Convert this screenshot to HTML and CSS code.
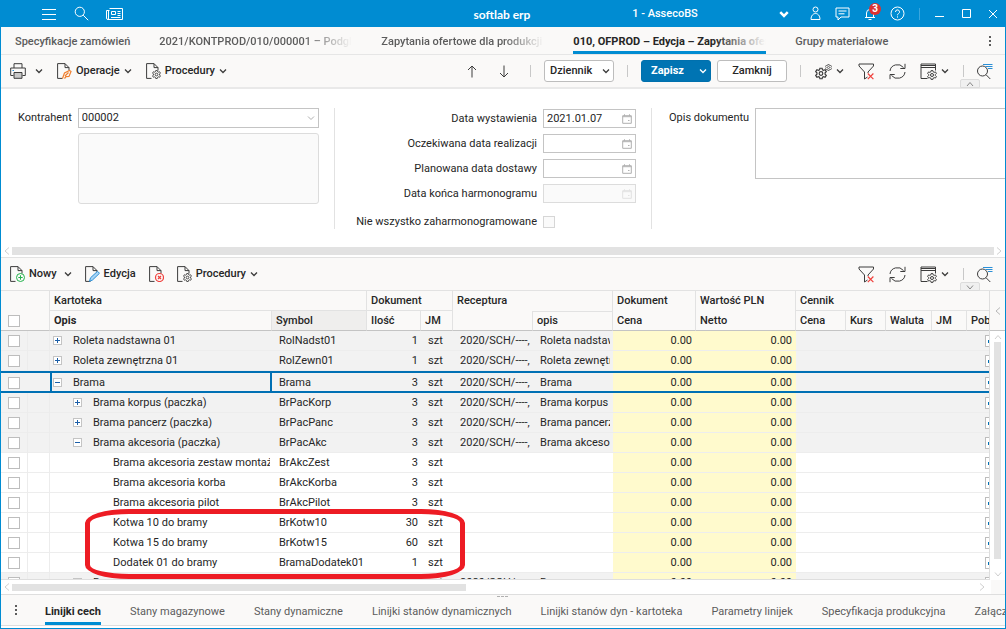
FILE: index.html
```html
<!DOCTYPE html>
<html lang="pl">
<head>
  <meta charset="UTF-8" />
  <meta name="viewport" content="width=device-width, initial-scale=1.0"/>
  <title>softlab erp</title>
  <link rel="stylesheet" href="styles.css">
</head>
<body>

  <!-- Icon set -->
  <svg class="sprite" aria-hidden="true">
    <symbol id="chev" viewBox="0 0 8 8"><path d="M1 2.5l3 3 3-3" /></symbol>
    <symbol id="left" viewBox="0 0 8 8"><path d="M6 0.500L2 4l4 3.500" /></symbol>
    <symbol id="right" viewBox="0 0 8 8"><path d="M2 0.500L6 4l-4 3.500" /></symbol>
    <symbol id="up" viewBox="0 0 8 8"><path d="M1 6l3-3.500L7 6" /></symbol>
    <symbol id="down" viewBox="0 0 8 8"><path d="M1 2.500L4 6l3-3.500" /></symbol>
    <symbol id="dots" viewBox="0 0 4 12"><path d="M1 1h2v2H1zM1 5h2v2H1zM1 9h2v2H1z" /></symbol>
    <symbol id="gear" viewBox="0 0 10 10"><path d="M4.100 0.600h1.800l.3 1.300 1 .5 1.200-.5 1 1.500-1 1v1.200l1 1-1 1.500-1.200-.5-1 .5-.3 1.300H4.100l-.3-1.300-1-.5-1.200.5-1-1.500 1-1V4.400l-1-1 1-1.500 1.200.5 1-.5z" /><circle cx="5" cy="5" r="1.500" /></symbol>
    <symbol id="page" viewBox="0 0 16 16"><path d="M6.500 15.400H1.600V0.600H9l4 4v2.900M9 0.600v4h4" /></symbol>
    <symbol id="filter" viewBox="0 0 17 17"><path d="M1 1h14.500v2L10 9v1M1 1v2l5.500 6v7l3-2" /><path class="red" d="M9.800 10.500l5.600 5.600m0-5.600l-5.600 5.600" /></symbol>
    <symbol id="refresh" viewBox="0 0 17 17"><path d="M1 8a7.500 7 0 0 1 13.500-3.500M16 9a7.500 7 0 0 1-13.500 3.500M16 .8V5.500h-4.700M1 16.200v-4.700h4.700" /></symbol>
    <symbol id="window" viewBox="0 0 17 17"><path d="M15.500 7.500V1H1v14.500h6.500M1 4.500h14.500M1 2.500h14.500" /><use href="#gear" x="7" y="7" width="10" height="10" /></symbol>
    <symbol id="find" viewBox="0 0 17 17"><circle cx="6.500" cy="8" r="5" /><path d="M10 11.700l4.300 4.300" /><path class="blue" d="M7 1.500h9.500M9.500 3.500h7M12 5.500h4.500" /></symbol>
    <symbol id="calendar" viewBox="0 0 10 10"><path d="M.7 1.700h8.600v7.600H.7zM.7 2.700h8.600M2.500 .3v1.500M7.500 .3v1.500" /><path d="M6 6.500h1.500" /></symbol>
  </svg>

  <header class="titlebar">
    <div class="title-left">
      <button aria-label="Menu"><svg width="16" height="16" viewBox="0 0 16 16"><path d="M1 3.500h14M1 8.500h14M1 13.500h14" /></svg></button>
      <button aria-label="Szukaj"><svg width="15" height="15" viewBox="0 0 15 15"><circle cx="5.800" cy="5.800" r="4.600" /><path d="M9.200 9.200l5 5" /></svg></button>
      <button aria-label="Aktualności"><svg width="17" height="14" viewBox="0 0 17 14"><path d="M3.500 1.500h13v11H2A1.500 1.500 0 0 1 .5 11V3.500h3M2.500 3.500V12M5.500 4.500h4v3h-4zM11.500 4.500h3M11.500 6.500h3M11.500 8.500h3M5 10.500h9.500" /></svg></button>
    </div>
    <h1 class="brand">softlab erp</h1>
    <label class="company">
      <select aria-label="Firma"><option>1 - AssecoBS</option></select>
      <svg class="chev" width="10" height="10"><use href="#chev" /></svg>
    </label>
    <div class="title-right">
      <button aria-label="Użytkownik"><svg width="11" height="15" viewBox="0 0 11 15"><circle cx="5.500" cy="3.500" r="2.500" /><path d="M1 13.500c0-8 9-8 9 0z" /></svg></button>
      <button aria-label="Wiadomości"><svg width="15" height="14" viewBox="0 0 15 14"><path d="M1 1h13v9H6l-3 3v-3H1zM3.500 4h8M3.500 6.800h6" /></svg></button>
      <button class="bell" aria-label="Powiadomienia"><svg width="12" height="14" viewBox="0 0 12 14"><path d="M1 10.500h10M2.500 10.500V6a3.500 3.500 0 0 1 7 0v4.500M4.500 12.500h3" /></svg><span class="badge">3</span></button>
      <button aria-label="Pomoc"><svg width="15" height="15" viewBox="0 0 15 15"><circle cx="7.500" cy="7.500" r="6.500" /><path d="M5.500 6a2 2 0 1 1 3 1.600q-1 .5-1 1.700M7.500 10.400v1.200" /></svg></button>
      <span class="sep"></span>
      <button aria-label="Minimalizuj"><svg width="11" height="11" viewBox="0 0 11 11"><path d="M1 8.500h9" /></svg></button>
      <button aria-label="Maksymalizuj"><svg width="11" height="11" viewBox="0 0 11 11"><path d="M1.500 1.500h8v8h-8z" /></svg></button>
      <button aria-label="Zamknij okno"><svg width="10" height="10" viewBox="0 0 10 10"><path d="M1 1l8 8M9 1L1 9" /></svg></button>
    </div>
  </header>

  <nav class="doc-tabs">
    <a href="#">Specyfikacje zamówień</a>
    <a href="#" class="cut wide">2021/KONTPROD/010/000001 – Podgląd</a>
    <a href="#" class="cut">Zapytania ofertowe dla produkcji</a>
    <a href="#" class="cut wide active">010, OFPROD – Edycja – Zapytania ofertowe</a>
    <a href="#">Grupy materiałowe</a>
    <button class="more" aria-label="Więcej kart"><svg width="4" height="12"><use href="#dots" /></svg></button>
  </nav>

  <!-- Document toolbar -->
  <div class="toolbar">
    <button class="tool print" aria-label="Drukuj"><svg width="16" height="16" viewBox="0 0 16 16"><path d="M4 5V.7h8V5M3.500 12.500H.7V5h14.600v7.500h-2.800" /><path class="paper" d="M4 9.500h8v5.800H4z" /><path class="blue" d="M2.500 7.500h1.500" /></svg><svg class="chev" width="8" height="8"><use href="#chev" /></svg></button>
    <button class="tool"><svg width="16" height="16" viewBox="0 0 16 16"><use href="#page" /><path class="orange" d="M6.500 15.500l2-5.500 5-2.500 1.500 1-2 5-3 .2-1.500 1.800M9 13l3.500-3.500" /></svg>Operacje<svg class="chev" width="8" height="8"><use href="#chev" /></svg></button>
    <button class="tool"><svg width="16" height="16" viewBox="0 0 16 16"><use href="#page" /><use href="#gear" x="7" y="7" width="9" height="9" /></svg>Procedury<svg class="chev" width="8" height="8"><use href="#chev" /></svg></button>

    <div class="actions">
      <div class="arrows">
        <button class="tool" aria-label="Poprzedni"><svg width="10" height="13" viewBox="0 0 10 13"><path d="M5 12.500V1M1 5l4-4 4 4" /></svg></button>
        <button class="tool" aria-label="Następny"><svg width="10" height="13" viewBox="0 0 10 13"><path d="M5 .5V12M1 8l4 4 4-4" /></svg></button>
      </div>
      <span class="sep"></span>
      <label class="journal">
        <select aria-label="Dziennik"><option>Dziennik</option></select>
        <svg class="chev" width="8" height="8"><use href="#chev" /></svg>
      </label>
      <span class="sep"></span>
      <div class="buttons">
        <button class="btn save">Zapisz<svg class="chev" width="8" height="8"><use href="#chev" /></svg></button>
        <button class="btn">Zamknij</button>
      </div>
    </div>
    <div class="view-tools">
      <span class="sep"></span>
      <button class="tool" aria-label="Ustawienia"><svg width="17" height="17" viewBox="0 0 17 17"><use href="#gear" x="0" y="4.500" width="12" height="12" /><use href="#gear" x="10" y="1" width="7" height="7" /></svg><svg class="chev" width="8" height="8"><use href="#chev" /></svg></button>
      <button class="tool" aria-label="Usuń filtr"><svg width="17" height="17"><use href="#filter" /></svg></button>
      <button class="tool" aria-label="Odśwież"><svg width="17" height="17"><use href="#refresh" /></svg></button>
      <button class="tool" aria-label="Widok"><svg width="17" height="17"><use href="#window" /></svg><svg class="chev" width="8" height="8"><use href="#chev" /></svg></button>
      <div class="search-tool">
        <span class="sep"></span>
        <button class="tool" aria-label="Wyszukaj"><svg width="17" height="17"><use href="#find" /></svg></button>
      </div>
    </div>
    <button class="fold" aria-label="Zwiń"><svg width="8" height="8"><use href="#up" /></svg></button>
  </div>

  <!-- Document header form -->
  <form class="form">
    <div class="col customer">
      <label for="kontrahent">Kontrahent</label>
      <div class="stack">
        <div class="field">
          <select id="kontrahent"><option>000002</option></select>
          <svg class="chev" width="8" height="8"><use href="#chev" /></svg>
        </div>
        <textarea aria-label="Dane kontrahenta" disabled></textarea>
      </div>
    </div>
    <div class="col dates">
      <label for="d1">Data wystawienia</label>
      <div class="field"><input id="d1" type="text" value="2021.01.07"><svg width="10" height="10"><use href="#calendar" /></svg></div>
      <label for="d2">Oczekiwana data realizacji</label>
      <div class="field"><input id="d2" type="text"><svg width="10" height="10"><use href="#calendar" /></svg></div>
      <label for="d3">Planowana data dostawy</label>
      <div class="field"><input id="d3" type="text"><svg width="10" height="10"><use href="#calendar" /></svg></div>
      <label for="d4">Data końca harmonogramu</label>
      <div class="field off"><input id="d4" type="text" disabled><svg width="10" height="10"><use href="#calendar" /></svg></div>
      <label for="nie">Nie wszystko zaharmonogramowane</label>
      <input id="nie" type="checkbox" disabled>
    </div>
    <div class="col notes">
      <label for="opis">Opis dokumentu</label>
      <textarea id="opis"></textarea>
    </div>
  </form>
  <div class="hscroll full">
    <svg width="8" height="8"><use href="#left" /></svg>
    <span class="thumb"></span>
    <svg width="8" height="8"><use href="#right" /></svg>
  </div>

  <!-- Lines toolbar -->
  <div class="toolbar lines">
    <button class="tool new"><svg width="16" height="16" viewBox="0 0 16 16"><use href="#page" /><circle class="green" cx="11.500" cy="11.500" r="4" /><path class="green" d="M9.300 11.500h4.400M11.500 9.300v4.400" /></svg>Nowy<svg class="chev" width="8" height="8"><use href="#chev" /></svg></button>
    <button class="tool"><svg width="16" height="16" viewBox="0 0 16 16"><use href="#page" /><path class="blue pen" d="M5.500 15.300l1-3.500 7-6.500 2 2-7 6.700z" /></svg>Edycja</button>
    <button class="tool" aria-label="Usuń"><svg width="16" height="16" viewBox="0 0 16 16"><use href="#page" /><circle class="red" cx="11.500" cy="11.500" r="4" /><path class="red" d="M10 10l3 3m0-3l-3 3" /></svg></button>
    <button class="tool"><svg width="16" height="16" viewBox="0 0 16 16"><use href="#page" /><use href="#gear" x="7" y="7" width="9" height="9" /></svg>Procedury<svg class="chev" width="8" height="8"><use href="#chev" /></svg></button>
    <div class="view-tools">
      <button class="tool" aria-label="Usuń filtr"><svg width="17" height="17"><use href="#filter" /></svg></button>
      <button class="tool" aria-label="Odśwież"><svg width="17" height="17"><use href="#refresh" /></svg></button>
      <button class="tool" aria-label="Widok"><svg width="17" height="17"><use href="#window" /></svg><svg class="chev" width="8" height="8"><use href="#chev" /></svg></button>
      <div class="search-tool">
        <span class="sep"></span>
        <button class="tool" aria-label="Wyszukaj"><svg width="17" height="17"><use href="#find" /></svg></button>
      </div>
    </div>
    <button class="fold" aria-label="Rozwiń"><svg width="8" height="8"><use href="#down" /></svg></button>
  </div>

  <main class="grid">
    <div class="table-wrap">
      <table>
        <colgroup>
          <col class="w-check"><col class="w-mark"><col class="w-opis"><col class="w-symbol"><col class="w-ilosc"><col class="w-jm"><col class="w-rec"><col class="w-rec"><col class="w-cena"><col class="w-netto"><col class="w-price"><col class="w-kurs"><col class="w-waluta"><col class="w-unit"><col>
        </colgroup>
        <thead>
          <tr>
            <th rowspan="2" class="pick"><input type="checkbox" aria-label="Zaznacz wszystko"></th>
            <th rowspan="2"></th>
            <th colspan="2" class="group">Kartoteka</th>
            <th colspan="2" class="group">Dokument</th>
            <th colspan="2">Receptura</th>
            <th>Dokument</th>
            <th>Wartość PLN</th>
            <th colspan="5" class="group">Cennik</th>
          </tr>
          <tr>
            <th class="sorted">Opis</th>
            <th class="current">Symbol</th>
            <th>Ilość</th>
            <th>JM</th>
            <th></th>
            <th class="top">opis</th>
            <th>Cena</th>
            <th>Netto</th>
            <th>Cena</th>
            <th>Kurs</th>
            <th>Waluta</th>
            <th>JM</th>
            <th>Pob</th>
          </tr>
        </thead>
        <tbody>
          <tr class="node">
            <td class="pick"><input type="checkbox" aria-label="Zaznacz"></td><td class="mark"></td>
            <td class="tree"><span><button class="plus" aria-label="Rozwiń"></button>Roleta nadstawna 01</span></td>
            <td><span>RolNadst01</span></td><td class="num">1</td><td>szt</td>
            <td><span>2020/SCH/----,</span></td><td><span>Roleta nadstawna 01</span></td>
            <td class="num price">0.00</td><td class="num price">0.00</td>
            <td colspan="4"></td><td class="pob"><input type="checkbox" aria-label="Pobierz"></td>
          </tr>
          <tr class="node">
            <td class="pick"><input type="checkbox" aria-label="Zaznacz"></td><td class="mark"></td>
            <td class="tree"><span><button class="plus" aria-label="Rozwiń"></button>Roleta zewnętrzna 01</span></td>
            <td><span>RolZewn01</span></td><td class="num">1</td><td>szt</td>
            <td><span>2020/SCH/----,</span></td><td><span>Roleta zewnętrzna 01</span></td>
            <td class="num price">0.00</td><td class="num price">0.00</td>
            <td colspan="4"></td><td class="pob"><input type="checkbox" aria-label="Pobierz"></td>
          </tr>
          <tr class="node selected">
            <td class="pick"><input type="checkbox" aria-label="Zaznacz"></td><td class="mark"></td>
            <td class="tree"><span><button class="minus" aria-label="Zwiń"></button>Brama</span></td>
            <td><span>Brama</span></td><td class="num">3</td><td>szt</td>
            <td><span>2020/SCH/----,</span></td><td><span>Brama</span></td>
            <td class="num price">0.00</td><td class="num price">0.00</td>
            <td colspan="4"></td><td class="pob"><input type="checkbox" aria-label="Pobierz"></td>
          </tr>
          <tr class="node">
            <td class="pick"><input type="checkbox" aria-label="Zaznacz"></td><td class="mark"></td>
            <td class="tree sub"><span><button class="plus" aria-label="Rozwiń"></button>Brama korpus (paczka)</span></td>
            <td><span>BrPacKorp</span></td><td class="num">3</td><td>szt</td>
            <td><span>2020/SCH/----,</span></td><td><span>Brama korpus (paczka)</span></td>
            <td class="num price">0.00</td><td class="num price">0.00</td>
            <td colspan="4"></td><td class="pob"><input type="checkbox" aria-label="Pobierz"></td>
          </tr>
          <tr class="node">
            <td class="pick"><input type="checkbox" aria-label="Zaznacz"></td><td class="mark"></td>
            <td class="tree sub"><span><button class="plus" aria-label="Rozwiń"></button>Brama pancerz (paczka)</span></td>
            <td><span>BrPacPanc</span></td><td class="num">3</td><td>szt</td>
            <td><span>2020/SCH/----,</span></td><td><span>Brama pancerz (paczka)</span></td>
            <td class="num price">0.00</td><td class="num price">0.00</td>
            <td colspan="4"></td><td class="pob"><input type="checkbox" aria-label="Pobierz"></td>
          </tr>
          <tr class="node">
            <td class="pick"><input type="checkbox" aria-label="Zaznacz"></td><td class="mark"></td>
            <td class="tree sub"><span><button class="minus" aria-label="Zwiń"></button>Brama akcesoria (paczka)</span></td>
            <td><span>BrPacAkc</span></td><td class="num">3</td><td>szt</td>
            <td><span>2020/SCH/----,</span></td><td><span>Brama akcesoria (paczka)</span></td>
            <td class="num price">0.00</td><td class="num price">0.00</td>
            <td colspan="4"></td><td class="pob"><input type="checkbox" aria-label="Pobierz"></td>
          </tr>
          <tr>
            <td class="pick"><input type="checkbox" aria-label="Zaznacz"></td><td class="mark"></td>
            <td class="tree leaf"><span>Brama akcesoria zestaw montaż</span></td>
            <td><span>BrAkcZest</span></td><td class="num">3</td><td>szt</td>
            <td></td><td></td>
            <td class="num price">0.00</td><td class="num price">0.00</td>
            <td colspan="4"></td><td class="pob"><input type="checkbox" aria-label="Pobierz"></td>
          </tr>
          <tr>
            <td class="pick"><input type="checkbox" aria-label="Zaznacz"></td><td class="mark"></td>
            <td class="tree leaf"><span>Brama akcesoria korba</span></td>
            <td><span>BrAkcKorba</span></td><td class="num">3</td><td>szt</td>
            <td></td><td></td>
            <td class="num price">0.00</td><td class="num price">0.00</td>
            <td colspan="4"></td><td class="pob"><input type="checkbox" aria-label="Pobierz"></td>
          </tr>
          <tr>
            <td class="pick"><input type="checkbox" aria-label="Zaznacz"></td><td class="mark"></td>
            <td class="tree leaf"><span>Brama akcesoria pilot</span></td>
            <td><span>BrAkcPilot</span></td><td class="num">3</td><td>szt</td>
            <td></td><td></td>
            <td class="num price">0.00</td><td class="num price">0.00</td>
            <td colspan="4"></td><td class="pob"><input type="checkbox" aria-label="Pobierz"></td>
          </tr>
          <tr>
            <td class="pick"><input type="checkbox" aria-label="Zaznacz"></td><td class="mark"></td>
            <td class="tree leaf"><span>Kotwa 10 do bramy</span></td>
            <td><span>BrKotw10</span></td><td class="num">30</td><td>szt</td>
            <td></td><td></td>
            <td class="num price">0.00</td><td class="num price">0.00</td>
            <td colspan="4"></td><td class="pob"><input type="checkbox" aria-label="Pobierz"></td>
          </tr>
          <tr>
            <td class="pick"><input type="checkbox" aria-label="Zaznacz"></td><td class="mark"></td>
            <td class="tree leaf"><span>Kotwa 15 do bramy</span></td>
            <td><span>BrKotw15</span></td><td class="num">60</td><td>szt</td>
            <td></td><td></td>
            <td class="num price">0.00</td><td class="num price">0.00</td>
            <td colspan="4"></td><td class="pob"><input type="checkbox" aria-label="Pobierz"></td>
          </tr>
          <tr>
            <td class="pick"><input type="checkbox" aria-label="Zaznacz"></td><td class="mark"></td>
            <td class="tree leaf"><span>Dodatek 01 do bramy</span></td>
            <td><span>BramaDodatek01</span></td><td class="num">1</td><td>szt</td>
            <td></td><td></td>
            <td class="num price">0.00</td><td class="num price">0.00</td>
            <td colspan="4"></td><td class="pob"><input type="checkbox" aria-label="Pobierz"></td>
          </tr>
          <tr class="node">
            <td class="pick"><input type="checkbox" aria-label="Zaznacz"></td><td class="mark"></td>
            <td class="tree sub"><span><button class="plus" aria-label="Rozwiń"></button>Brama prowadzenie (paczka)</span></td>
            <td><span>BrPacProw</span></td><td class="num">3</td><td>szt</td>
            <td><span>2020/SCH/----,</span></td><td><span>Brama</span></td>
            <td class="num price">0.00</td><td class="num price">0.00</td>
            <td colspan="4"></td><td class="pob"><input type="checkbox" aria-label="Pobierz"></td>
          </tr>
        </tbody>
      </table>
      <div class="callout"></div>
    </div>
    <div class="side">
      <button class="side-head" aria-label="Panel boczny"><svg width="8" height="10"><use href="#left" /></svg></button>
      <div class="vscroll">
        <svg width="8" height="8"><use href="#up" /></svg>
        <span class="thumb"></span>
        <svg width="8" height="8"><use href="#down" /></svg>
      </div>
    </div>
  </main>
  <div class="hscroll part">
    <svg width="8" height="8"><use href="#left" /></svg>
    <span class="track"><span class="thumb"></span></span>
    <svg width="8" height="8"><use href="#right" /></svg>
    <span class="corner"></span>
  </div>

  <nav class="line-tabs">
    <span class="grip"></span>
    <button class="more" aria-label="Więcej"><svg width="4" height="12"><use href="#dots" /></svg></button>
    <a href="#" class="active">Linijki cech</a>
    <a href="#">Stany magazynowe</a>
    <a href="#">Stany dynamiczne</a>
    <a href="#">Linijki stanów dynamicznych</a>
    <a href="#">Linijki stanów dyn - kartoteka</a>
    <a href="#">Parametry linijek</a>
    <a href="#">Specyfikacja produkcyjna</a>
    <a href="#">Załączniki</a>
  </nav>

</body>
</html>
```
FILE: styles.css
```css
* {
  margin: 0;
  padding: 0;
  box-sizing: border-box;
}

body {
  display: flex;
  flex-direction: column;
  height: 100vh;
  overflow: hidden;
  border: 1px solid #008cd2;
  border-top: 0;
  background: #fff;
  color: #262626;
  font: 11px/14px Roboto, sans-serif;
}

button, select, input, textarea {
  font: inherit;
  color: inherit;
  border: 0;
  background: none;
  border-radius: 0;
}

select, input {
  appearance: none;
}

a {
  color: inherit;
  text-decoration: none;
}

/* Icons */
.sprite {
  position: absolute;
  width: 0;
  height: 0;
}

svg {
  display: block;
  flex: none;
  fill: none;
  stroke: #3c3c3c;
  stroke-width: 1;
}

.chev { stroke-width: 1.3; }
.red { stroke: #f0403c; stroke-width: 1.2; }
.green { stroke: #22b24c; }
.blue { stroke: #2b8fd6; }
.orange { stroke: #f08030; stroke-width: 1.2; }
.paper { fill: #c8c8c8; }
.pen { fill: #a8d4f5; }

/* Title bar */
.titlebar {
  display: grid;
  grid-template-columns: 473fr 159fr 157fr 216px;
  align-items: center;
  flex: none;
  height: 27px;
  background: #008cd2;
  color: #fff;
}

.titlebar svg {
  stroke: #fff;
}

.titlebar button {
  display: flex;
  align-items: center;
  justify-content: center;
}

.title-left {
  display: flex;
  align-items: center;
  gap: 17px;
  padding-left: 40px;
}

.brand {
  font: 700 12px/16px Lato, sans-serif;
  padding-top: 2px;
}

.company {
  display: flex;
  align-items: center;
}

.company select {
  flex: 1;
  font-weight: 500;
}

.company .chev {
  stroke-width: 2;
}

.title-right {
  display: flex;
  align-items: center;
  justify-content: flex-end;
  gap: 14px;
  padding-right: 7px;
}

.titlebar .sep {
  background: #3aa6de;
}

.title-right button:nth-last-child(-n+2) {
  margin-left: 2px;
}

.bell {
  position: relative;
}

.badge {
  position: absolute;
  top: -4px;
  left: 5px;
  width: 12px;
  height: 12px;
  border-radius: 50%;
  background: #dc3232;
  font-size: 10px;
  line-height: 12px;
  font-weight: 700;
}

.sep {
  flex: none;
  width: 1px;
  height: 12px;
  background: #c8c8c8;
}

/* Open documents */
.doc-tabs {
  display: flex;
  flex: none;
  gap: 29px;
  height: 28px;
  padding: 0 13px 0 14px;
  border-bottom: 1px solid #e6e6e6;
  background: #faf9f8;
  color: #5c5c5c;
  font-weight: 500;
  line-height: 29px;
}

.doc-tabs a {
  flex: none;
  white-space: nowrap;
}

.doc-tabs .cut {
  width: 163px;
  overflow: hidden;
  -webkit-mask-image: linear-gradient(90deg, #000 75%, transparent);
}

.doc-tabs .wide {
  width: 193px;
}

.doc-tabs .active {
  position: relative;
  color: #262626;
  font-weight: 700;
  -webkit-mask-image: none;
}

.doc-tabs .active::before {
  content: '';
  position: absolute;
  inset: 0 0 3px 140px;
  background: linear-gradient(90deg, transparent, #faf9f8);
}

.doc-tabs .active::after,
.line-tabs .active::after {
  content: '';
  position: absolute;
  left: 0;
  right: 0;
  bottom: 0;
  height: 3px;
  background: #008cd2;
}

.more {
  display: flex;
  align-items: center;
  width: 4px;
}

.more svg {
  fill: #5c5c5c;
  stroke: none;
}

.doc-tabs .more {
  margin-left: auto;
}

/* Toolbars */
.toolbar {
  position: relative;
  display: flex;
  align-items: center;
  flex: none;
  gap: 13px;
  height: 34px;
  padding: 0 12px 0 9px;
  border-bottom: 2px solid #e9e9e9;
  background: #faf9f8;
}

.toolbar.lines {
  gap: 12px;
  padding-left: 8px;
  border-top: 1px solid #e2e2e2;
  border-bottom: 1px solid #e2e2e2;
}

.tool {
  display: flex;
  align-items: center;
  gap: 4px;
  font-weight: 500;
}

.print {
  gap: 9px;
}

.new .chev {
  margin-left: 3px;
}

.actions {
  display: flex;
  align-items: center;
  gap: 13px;
  margin-left: auto;
}

.arrows {
  display: flex;
  gap: 22px;
  margin-right: 8px;
}

.buttons {
  display: flex;
  gap: 6px;
}

.view-tools {
  display: flex;
  align-items: center;
  gap: 14px;
}

.lines .view-tools {
  margin-left: auto;
}

.search-tool {
  display: flex;
  align-items: center;
  gap: 12px;
}

.journal {
  position: relative;
  display: flex;
  align-items: center;
}

.journal select {
  width: 70px;
  height: 22px;
  padding-left: 5px;
  border: 1px solid #bdbdbd;
  border-radius: 3px;
  background: #fff;
  font-weight: 500;
}

.journal .chev {
  position: absolute;
  right: 4px;
}

.btn {
  width: 70px;
  height: 22px;
  border: 1px solid #bdbdbd;
  border-radius: 3px;
  background: #fff;
  font-weight: 500;
}

.save {
  display: flex;
  align-items: center;
  justify-content: space-between;
  padding: 0 3px 0 9px;
  border-color: #0070ad;
  background: #0074b3;
  color: #fff;
  font-weight: 700;
}

.save svg {
  stroke: #fff;
}

.fold {
  position: absolute;
  right: 25px;
  bottom: -1px;
  display: flex;
  align-items: center;
  justify-content: center;
  width: 20px;
  height: 9px;
  border: 1px solid #dcdcdc;
  border-radius: 2px 2px 0 0;
  background: #f0f0f0;
}

.fold svg {
  stroke: #888;
}

/* Form */
.form {
  display: flex;
  flex: none;
  padding: 19px 0 16px;
}

.col {
  min-height: 120px;
}

.customer {
  display: flex;
  gap: 6px;
  width: 334px;
  padding-left: 17px;
  border-right: 1px solid #e2e2e2;
}

.customer label, .notes label {
  padding-top: 3px;
  white-space: nowrap;
}

.stack {
  display: flex;
  flex-direction: column;
  gap: 5px;
  flex: 1;
  padding-right: 15px;
}

.field {
  position: relative;
  display: flex;
  align-items: center;
}

.field svg {
  position: absolute;
  right: 4px;
  stroke: #b0b0b0;
}

.field .chev {
  stroke-width: 1;
}

.field select, .field input {
  width: 100%;
  height: 19px;
  padding: 0 3px;
  border: 1px solid #c4c4c4;
  background: #fff;
}

.stack .field select {
  height: 20px;
}

textarea {
  display: block;
  resize: none;
  border: 1px solid #c4c4c4;
}

.stack textarea {
  height: 71px;
  border-color: #dcdcdc;
  border-radius: 3px;
  background: #fafafa;
}

.dates {
  display: grid;
  grid-template-columns: 1fr 93px;
  column-gap: 6px;
  row-gap: 6px;
  align-items: center;
  align-content: start;
  width: 317px;
  padding: 1px 15px 0 0;
  border-right: 1px solid #e2e2e2;
  text-align: right;
}

.off input {
  border-color: #dcdcdc;
  background: #fafafa;
}

.off svg {
  stroke: #e2e2e2;
}

input[type="checkbox"] {
  display: block;
  width: 12px;
  height: 12px;
  border: 1px solid #bdbdbd;
  background: #fff;
}

.dates input[type="checkbox"] {
  margin-top: 6px;
  border-color: #d6d6d6;
  background: #fafafa;
}

.dates label:last-of-type {
  padding-top: 6px;
}

.notes {
  display: flex;
  flex: 1;
  gap: 6px;
  padding-left: 17px;
}

.notes textarea {
  flex: 1;
  min-width: 0;
  height: 71px;
  border-right: 0;
}

/* Scrollbars */
.hscroll {
  display: flex;
  align-items: center;
  flex: none;
  height: 12px;
}

.hscroll svg, .vscroll svg {
  stroke: #cfcfcf;
}

.thumb {
  display: block;
  background: #e2e2e2;
}

.full {
  padding: 0 2px;
  gap: 1px;
}

.full .thumb {
  flex: 1;
  height: 8px;
}

.part {
  height: 14px;
  padding-left: 2px;
  gap: 1px;
}

.track {
  flex: 1;
}

.part .thumb {
  width: 47%;
  height: 7px;
}

.corner {
  align-self: stretch;
  width: 14px;
  margin-left: 4px;
  background: #faf9f8;
}

/* Lines grid */
.grid {
  display: flex;
  flex: 1;
  min-height: 0;
}

.table-wrap {
  position: relative;
  flex: 1;
  min-width: 0;
  overflow: hidden;
  border-right: 1px solid #dedede;
  border-bottom: 1px solid #dedede;
}

table {
  width: 100%;
  table-layout: fixed;
  border-collapse: separate;
  border-spacing: 0;
}

.w-check { width: 27px; }
.w-mark { width: 22px; }
.w-opis { width: 222px; }
.w-symbol { width: 95px; }
.w-ilosc { width: 54px; }
.w-jm { width: 32px; }
.w-rec { width: 80px; }
.w-cena { width: 83px; }
.w-netto { width: 100px; }
.w-price { width: 50px; }
.w-kurs { width: 40px; }
.w-waluta { width: 46px; }
.w-unit { width: 35px; }

th {
  height: 20px;
  padding-left: 4px;
  overflow: hidden;
  border-right: 1px solid #e2e2e2;
  background: #faf9f8;
  font-weight: 500;
  text-align: left;
  white-space: nowrap;
}

thead tr:last-child th, th[rowspan] {
  border-bottom: 1px solid #c4c4c4;
}

th.group {
  border-bottom: 1px solid #e2e2e2;
}

th.pick {
  border-right: 0;
  padding: 0 0 3px 7px;
  vertical-align: bottom;
}

th:last-child {
  border-right: 0;
}

th.top {
  border-top: 1px solid #e2e2e2;
}

th.sorted {
  font-weight: 700;
}

th.current {
  background: #efeeed;
}

td {
  height: 20px;
  padding: 1px 3px 0 7px;
  overflow: hidden;
  border-bottom: 1px solid #ededed;
  white-space: nowrap;
}

td span {
  display: block;
  overflow: hidden;
}

.num {
  text-align: right;
}

.node td {
  background: #f2f2f2;
}

tbody .price {
  padding-right: 4px;
  background: #fffacd;
}

td.pick, td.mark {
  border-right: 1px solid #ececec;
}

td.tree {
  padding: 1px 2px 0 3px;
}

td.sub {
  padding-left: 23px;
}

td.leaf {
  padding-left: 63px;
}

.tree button {
  display: inline-block;
  width: 9px;
  height: 9px;
  margin-right: 11px;
  border: 1px solid #c4c4c4;
  background: linear-gradient(#1c5fa8, #1c5fa8) center / 5px 1px no-repeat, #fff;
}

.tree .plus {
  background: linear-gradient(#1c5fa8, #1c5fa8) center / 5px 1px no-repeat, linear-gradient(#1c5fa8, #1c5fa8) center / 1px 5px no-repeat, #fff;
}

.selected td {
  height: 22px;
  border: 0;
  box-shadow: inset 0 2px #0070b4, inset 0 -2px #0070b4;
}

.selected td.tree {
  box-shadow: inset 0 0 0 2px #0070b4;
}

td.pob {
  padding-left: 18px;
}

.pob input[type="checkbox"] {
  background: linear-gradient(#0070b4, #0070b4) 2px center / 5px 3px no-repeat, #fff;
}

/* Marker around the added lines */
.callout {
  position: absolute;
  left: 84px;
  top: 218px;
  width: 380px;
  height: 70px;
  border: 5px solid #ed1c24;
  border-radius: 44px / 14px;
  pointer-events: none;
}

.side {
  display: flex;
  flex-direction: column;
  width: 15px;
}

.side-head {
  display: flex;
  align-items: center;
  justify-content: center;
  height: 40px;
  border-bottom: 1px solid #c4c4c4;
  background: #faf9f8;
}

.side-head svg {
  stroke: #b8b8b8;
}

.vscroll {
  display: flex;
  flex: 1;
  flex-direction: column;
  align-items: center;
  gap: 1px;
  padding: 2px 0;
}

.vscroll .thumb {
  flex: 1;
  width: 7px;
  margin-bottom: 10px;
}

/* Detail tabs */
.line-tabs {
  position: relative;
  display: flex;
  flex: none;
  gap: 29px;
  height: 32px;
  margin-bottom: 2px;
  padding-left: 13px;
  overflow: hidden;
  border-top: 1px solid #dedede;
  border-bottom: 1px solid #dedede;
  background: #faf9f8;
  color: #5c5c5c;
  line-height: 33px;
}

.line-tabs a {
  position: relative;
  flex: none;
  height: 30px;
}

.line-tabs .active {
  color: #262626;
  font-weight: 700;
}

.line-tabs .more {
  margin-right: -2px;
}

.grip {
  position: absolute;
  top: 1px;
  left: 50%;
  width: 11px;
  height: 1px;
  margin-left: -6px;
  background: repeating-linear-gradient(90deg, #b0b0b0 0 3px, transparent 3px 4px);
}
```
